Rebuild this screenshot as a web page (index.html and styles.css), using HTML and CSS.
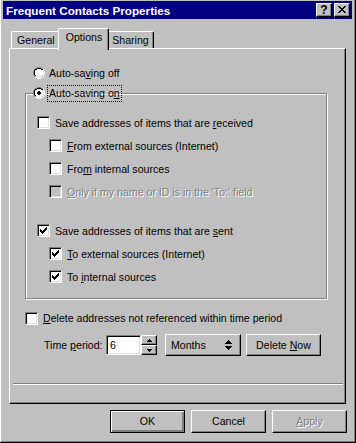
FILE: index.html
```html
<!DOCTYPE html>
<html>
	<head>
		<meta charset="utf-8">
		<title>Frequent Contacts Properties</title>
		<link rel="stylesheet" href="styles.css">
	</head>
	<body>
		<div class="window">
			<div class="titlebar">
				<span class="title">Frequent Contacts Properties</span>
				<span class="cap-btn">?</span>
				<span class="cap-btn close">
					<svg width="8" height="7" viewBox="0 0 8 7"><path d="M0 0h2v1h1v1h2v-1h1v-1h2v1h-1v1h-1v1h-1v1h1v1h1v1h1v1h-2v-1h-1v-1h-2v1h-1v1h-2v-1h1v-1h1v-1h1v-1h-1v-1h-1v-1h-1z" fill="#000"/></svg>
				</span>
			</div>

			<div class="tabs">
				<span class="tab">General</span>
				<span class="tab active">Options</span>
				<span class="tab">Sharing</span>
			</div>

			<div class="panel">
				<div class="content">
					<div class="row radio-row">
						<span class="radio"></span>
						<span>Auto-sa<u>v</u>ing off</span>
					</div>

					<fieldset class="group">
						<legend>
							<span class="radio checked"></span>
							<span class="focus">Auto-saving o<u>n</u></span>
						</legend>

						<div class="row lvl1">
							<span class="check"></span>
							<span>Save addresses of items that are <u>r</u>eceived</span>
						</div>
						<div class="row lvl2">
							<span class="check"></span>
							<span><u>F</u>rom external sources (Internet)</span>
						</div>
						<div class="row lvl2">
							<span class="check"></span>
							<span>Fro<u>m</u> internal sources</span>
						</div>
						<div class="row lvl2 disabled">
							<span class="check"></span>
							<span><u>O</u>nly if my name or ID is in the 'To:' field</span>
						</div>

						<div class="row lvl1 spaced">
							<span class="check on"></span>
							<span>Save addresses of items that are <u>s</u>ent</span>
						</div>
						<div class="row lvl2">
							<span class="check on"></span>
							<span><u>T</u>o external sources (Internet)</span>
						</div>
						<div class="row lvl2">
							<span class="check on"></span>
							<span>To <u>i</u>nternal sources</span>
						</div>
					</fieldset>

					<div class="row delete-row">
						<span class="check"></span>
						<span><u>D</u>elete addresses not referenced within time period</span>
					</div>

					<div class="period">
						<span class="label">Time <u>p</u>eriod:</span>
						<span class="field">6</span>
						<span class="spin">
							<span class="spin-btn"><svg width="5" height="3" viewBox="0 0 5 3"><path d="M2 0h1v1h1v1h1v1h-5v-1h1v-1h1z"/></svg></span>
							<span class="spin-btn"><svg width="5" height="3" viewBox="0 0 5 3"><path d="M0 0h5v1h-1v1h-1v1h-1v-1h-1v-1h-1z"/></svg></span>
						</span>
						<span class="select">
							<span>Months</span>
							<svg width="7" height="11" viewBox="0 0 7 11"><path d="M3 0h1v1h1v1h1v1h1v1h-7v-1h1v-1h1v-1h1zM0 6h7v1h-1v1h-1v1h-1v1h-1v-1h-1v-1h-1v-1h-1z"/></svg>
						</span>
						<span class="btn wide"><span>Delete <u>N</u>ow</span></span>
					</div>
				</div>
				<div class="sep"></div>
			</div>

			<div class="buttons">
				<span class="btn default"><span>OK</span></span>
				<span class="btn"><span>Cancel</span></span>
				<span class="btn disabled"><span><u>A</u>pply</span></span>
			</div>
		</div>
	</body>
</html>
```

FILE: styles.css
```css
html, body{
	margin: 0;
	padding: 0;
	background: #c0c0c0;
}
body{
	font-family: "Liberation Sans", Arial, sans-serif;
	font-size: 10.6px;
	color: #000;
}
u{
	text-decoration: underline;
	text-underline-offset: 1px;
}

.window{
	width: 356px;
	height: 443px;
	box-sizing: border-box;
	padding: 1px 3px 0 3px;
	background: #c0c0c0;
	border-right: 1px solid #000;
	border-bottom: 1px solid #000;
	box-shadow: inset 1px 0 #fff, inset -1px -1px #808080;
	display: flex;
	flex-direction: column;
}

/* caption */
.titlebar{
	height: 18px;
	background: #000080;
	display: flex;
	align-items: center;
	padding: 0 2px 0 2px;
}
.title{
	flex: 1;
	color: #fff;
	font-weight: bold;
	font-size: 11.7px;
	padding-left: 1px;
}
.cap-btn{
	width: 16px;
	height: 14px;
	box-sizing: border-box;
	background: #c0c0c0;
	border-top: 1px solid #fff;
	border-left: 1px solid #fff;
	border-right: 1px solid #000;
	border-bottom: 1px solid #000;
	box-shadow: inset -1px -1px #808080;
	display: flex;
	align-items: center;
	justify-content: center;
	font-weight: bold;
	font-size: 12px;
	line-height: 12px;
	padding-bottom: 1px;
}
.cap-btn.close{
	margin-left: 2px;
	padding: 0 1px 1px 0;
}

/* tabs */
.tabs{
	display: flex;
	align-items: flex-end;
	height: 20px;
	margin-top: 9px;
	padding-left: 8px;
	position: relative;
	z-index: 1;
}
.tab{
	height: 17px;
	box-sizing: border-box;
	padding: 2px 4px 0 5px;
	border-top: 1px solid #fff;
	border-left: 1px solid #fff;
	border-right: 1px solid #000;
	border-radius: 2px 2px 0 0;
	box-shadow: inset -1px 0 #808080;
	background: #c0c0c0;
}
.tab.active{
	height: 22px;
	margin: 0 -2px -2px -2px;
	padding: 2px 6px 0 7px;
	position: relative;
	z-index: 2;
}
.tab + .tab:not(.active){
	border-left: none;
}

/* property sheet */
.panel{
	margin-left: 6px;
	width: 337px;
	height: 356px;
	box-sizing: border-box;
	border-top: 1px solid #fff;
	border-left: 1px solid #fff;
	border-right: 1px solid #000;
	border-bottom: 1px solid #000;
	box-shadow: inset -1px -1px #808080;
	display: flex;
	flex-direction: column;
}
.content{
	padding: 16px 18px 0 15px;
}
.sep{
	margin: auto 2px 18px 3px;
	height: 0;
	border-top: 1px solid #808080;
	border-bottom: 1px solid #fff;
}

.row{
	display: flex;
	align-items: center;
	height: 16px;
	white-space: nowrap;
}
.radio-row{
	padding-left: 8px;
	gap: 4px;
}

.radio{
	width: 12px;
	height: 12px;
	flex: none;
	background: url("data:image/svg+xml,%3Csvg xmlns='http://www.w3.org/2000/svg' width='12' height='12' shape-rendering='crispEdges'%3E%3Cpath d='M4 0h4v1h-4zM2 1h2v1h-2zM8 1h2v1h-2zM1 2h1v2h-1zM0 4h1v4h-1zM1 8h1v2h-1z' fill='%23808080'/%3E%3Cpath d='M4 1h4v1h-4zM2 2h2v1h-2zM8 2h2v1h-2zM2 3h-1v1h1zM1 4h1v4h-1zM2 8h1v1h-1z' fill='%23000'/%3E%3Cpath d='M10 2h1v2h-1zM11 4h1v4h-1zM10 8h1v2h-1zM8 10h2v1h-2zM4 11h4v1h-4zM2 10h2v1h-2z' fill='%23fff'/%3E%3Cpath d='M10 4h1v4h-1zM9 8h1v1h-1zM8 9h1v1h-1zM4 10h4v1h-4zM3 9h1v1h-1z' fill='%23dfdfdf'/%3E%3Cpath d='M4 2h4v1h1v1h1v4h-1v1h-1v1h-4v-1h-1v-1h-1v-4h1v-1h1z' fill='%23fff'/%3E%3C/svg%3E") no-repeat;
}
.radio.checked{
	background: url("data:image/svg+xml,%3Csvg xmlns='http://www.w3.org/2000/svg' width='12' height='12' shape-rendering='crispEdges'%3E%3Cpath d='M4 0h4v1h-4zM2 1h2v1h-2zM8 1h2v1h-2zM1 2h1v2h-1zM0 4h1v4h-1zM1 8h1v2h-1z' fill='%23808080'/%3E%3Cpath d='M4 1h4v1h-4zM2 2h2v1h-2zM8 2h2v1h-2zM2 3h-1v1h1zM1 4h1v4h-1zM2 8h1v1h-1z' fill='%23000'/%3E%3Cpath d='M10 2h1v2h-1zM11 4h1v4h-1zM10 8h1v2h-1zM8 10h2v1h-2zM4 11h4v1h-4zM2 10h2v1h-2z' fill='%23fff'/%3E%3Cpath d='M10 4h1v4h-1zM9 8h1v1h-1zM8 9h1v1h-1zM4 10h4v1h-4zM3 9h1v1h-1z' fill='%23dfdfdf'/%3E%3Cpath d='M4 2h4v1h1v1h1v4h-1v1h-1v1h-4v-1h-1v-1h-1v-4h1v-1h1z' fill='%23fff'/%3E%3Cpath d='M5 4h2v1h1v2h-1v1h-2v-1h-1v-2h1z' fill='%23000'/%3E%3C/svg%3E") no-repeat;
}

.check{
	width: 13px;
	height: 13px;
	flex: none;
	box-sizing: border-box;
	background: #fff;
	border-top: 1px solid #808080;
	border-left: 1px solid #808080;
	border-right: 1px solid #fff;
	border-bottom: 1px solid #fff;
	box-shadow: inset 1px 1px #000, inset -1px -1px #dfdfdf;
}
.check.on{
	background: #fff url("data:image/svg+xml,%3Csvg xmlns='http://www.w3.org/2000/svg' width='11' height='11' shape-rendering='crispEdges'%3E%3Cpath d='M8 2h1v1h-1zM7 3h2v1h-2zM2 4h1v1h-1zM6 4h3v1h-3zM2 5h2v1h-2zM5 5h3v1h-3zM2 6h5v1h-5zM3 7h3v1h-3zM4 8h1v1h-1z' fill='%23000'/%3E%3C/svg%3E") no-repeat 0 0;
}
.row.disabled .check{
	background: #c0c0c0;
}
.row.disabled span:last-child{
	color: #808080;
	text-shadow: 1px 1px #fff;
}

/* group box */
.group{
	margin: 4px 0 0 0;
	padding: 10px 0 10px 11px;
	border: 1px solid #808080;
	box-shadow: 1px 1px 0 #fff, inset 1px 1px 0 #fff;
	min-width: 0;
}
.group legend{
	display: flex;
	align-items: center;
	gap: 3px;
	height: 16px;
	padding: 0 1px 0 0;
	margin-left: -4px;
	white-space: nowrap;
}
.focus{
	outline: 1px dotted #000;
	outline-offset: 0;
	padding: 1px 1px 2px 1px;
	line-height: 12px;
}
.group .row{
	height: 23px;
	gap: 5px;
}
.group .lvl2{
	padding-left: 12px;
}
.group .spaced{
	margin-top: 16px;
}

.delete-row{
	margin-top: 11px;
	gap: 5px;
}

.period{
	display: flex;
	align-items: center;
	margin-top: 8px;
	padding-left: 19px;
}
.label{
	width: 62px;
}
.field{
	width: 35px;
	height: 20px;
	box-sizing: border-box;
	background: #fff;
	border-top: 1px solid #808080;
	border-left: 1px solid #808080;
	border-right: 1px solid #fff;
	border-bottom: 1px solid #fff;
	box-shadow: inset 1px 1px #000, inset -1px -1px #dfdfdf;
	padding: 2px 0 0 3px;
	line-height: 14px;
}
.spin{
	display: flex;
	flex-direction: column;
	width: 16px;
	height: 20px;
	margin-right: 8px;
}
.spin-btn{
	flex: 1;
	box-sizing: border-box;
	border-top: 1px solid #fff;
	border-left: 1px solid #fff;
	border-right: 1px solid #000;
	border-bottom: 1px solid #000;
	box-shadow: inset -1px -1px #808080;
	display: flex;
	align-items: center;
	justify-content: center;
}
.select{
	width: 76px;
	height: 22px;
	box-sizing: border-box;
	display: flex;
	align-items: center;
	justify-content: space-between;
	padding: 0 8px 0 5px;
	border-top: 1px solid #fff;
	border-left: 1px solid #fff;
	border-right: 1px solid #000;
	border-bottom: 1px solid #000;
	box-shadow: inset -1px -1px #808080;
	margin-right: 5px;
}

.btn{
	width: 75px;
	height: 23px;
	box-sizing: border-box;
	display: flex;
	align-items: center;
	justify-content: center;
	border-top: 1px solid #fff;
	border-left: 1px solid #fff;
	border-right: 1px solid #000;
	border-bottom: 1px solid #000;
	box-shadow: inset -1px -1px #808080;
	padding-bottom: 1px;
	white-space: nowrap;
}
.btn.wide{
	height: 22px;
}
.btn.default{
	border: 1px solid #000;
	box-shadow: inset 1px 1px #fff, inset -2px -2px #808080, inset -1px -1px #000;
}
.btn.disabled{
	color: #808080;
	text-shadow: 1px 1px #fff;
}

.buttons{
	display: flex;
	justify-content: flex-end;
	gap: 6px;
	margin-top: 6px;
	padding-right: 5px;
}
```
